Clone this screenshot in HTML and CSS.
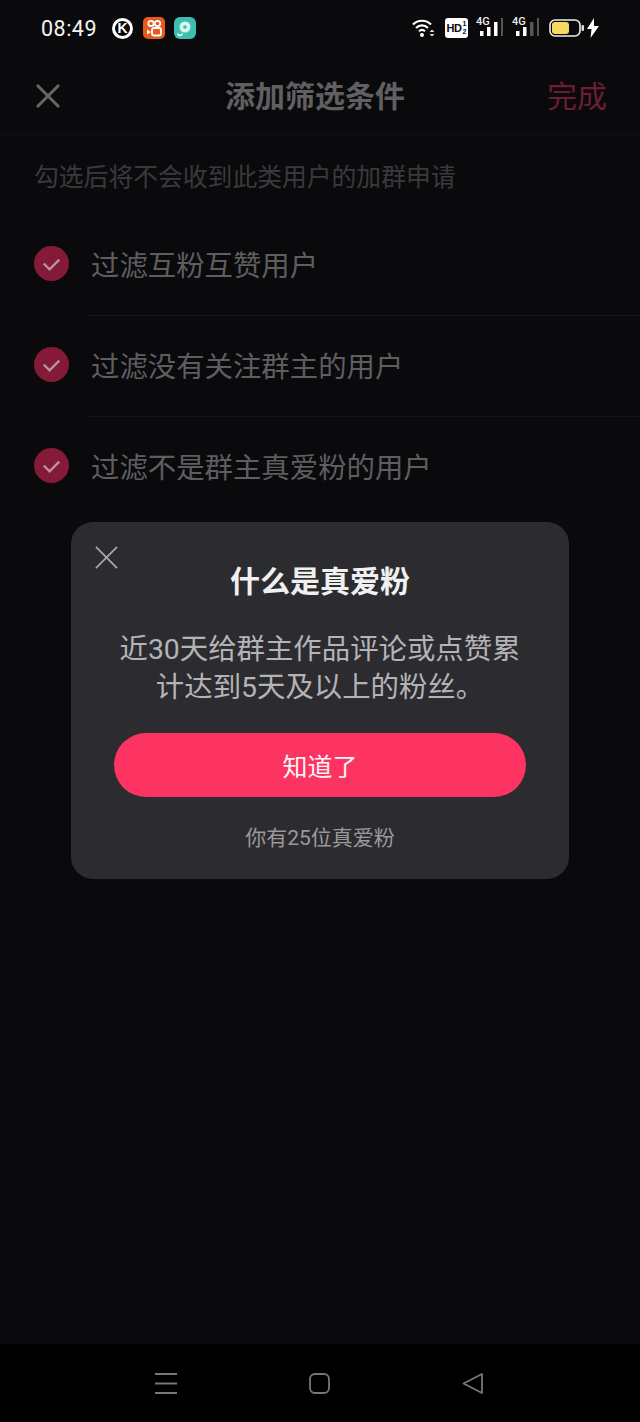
FILE: index.html
```html
<!DOCTYPE html>
<html lang="zh-CN">
<head>
<meta charset="utf-8">
<title>添加筛选条件</title>
<link rel="stylesheet" href="styles.css">
</head>
<body>
<div class="page">
  <div class="status">
    <div class="status-left">
      <span class="clock">08:49</span>
      <span class="k-icon">K</span>
      <svg class="app" width="22" height="22" viewBox="0 0 22 22"><rect width="22" height="22" rx="5" fill="#e8591c"/><circle cx="8" cy="6.500" r="2.700" fill="none" stroke="#fff" stroke-width="1.800"/><circle cx="14.500" cy="6.500" r="2.700" fill="none" stroke="#fff" stroke-width="1.800"/><rect x="9" y="11" width="9" height="7.500" rx="2" fill="none" stroke="#fff" stroke-width="1.800"/><path d="M4 12.500l4 2.500-4 2.500z" fill="#fff"/></svg>
      <svg class="app" width="22" height="22" viewBox="0 0 22 22"><rect width="22" height="22" rx="6" fill="#3dbfb0"/><circle cx="11" cy="10" r="5.500" fill="#d9f3ef"/><circle cx="11" cy="10" r="1.800" fill="#3dbfb0"/><path d="M4 16.500a2 2 0 0 0 4 0" fill="none" stroke="#fff" stroke-width="1.400"/></svg>
    </div>
    <div class="status-right">
      <svg width="24" height="20" viewBox="0 0 24 20"><path d="M1 6.500C6 1.500 14 1.500 19 6.500M4 10c3.500-3.500 8.500-3.500 12 0M7 13.200c2-1.800 4-1.800 6 0" fill="none" stroke="#fff" stroke-width="2.200"/><circle cx="10" cy="17" r="2" fill="#fff"/><path d="M20 11.500l2.500 2.500h-5zM20 18.500l2.500-2.500h-5z" fill="#ddd"/></svg>
      <span class="hd"><span class="hd-main">HD</span><span class="hd-frac"><span>1</span><span>2</span></span></span>
      <div class="signal">
        <span class="four-g">4G</span>
        <svg width="26" height="20" viewBox="0 0 26 20"><rect x="3" y="13" width="3.500" height="5" fill="#fff"/><rect x="10" y="9" width="3.500" height="9" fill="#fff"/><rect x="17" y="4" width="3.500" height="14" fill="#fff"/><rect x="24" y="0" width="2" height="18" fill="#555"/></svg>
      </div>
      <div class="signal">
        <span class="four-g">4G</span>
        <svg width="26" height="20" viewBox="0 0 26 20"><rect x="3" y="13" width="3.500" height="5" fill="#fff"/><rect x="10" y="9" width="3.500" height="9" fill="#fff"/><rect x="17" y="4" width="3.500" height="14" fill="#555"/><rect x="24" y="0" width="2" height="18" fill="#555"/></svg>
      </div>
      <svg class="battery" width="35" height="20" viewBox="0 0 35 20"><rect x="1" y="2" width="30" height="16" rx="5" fill="none" stroke="#f2f0e4" stroke-width="1.600"/><rect x="3" y="4" width="17" height="12" rx="3" fill="#f7d860"/><rect x="32.500" y="7" width="2.500" height="6" rx="1" fill="#ddd"/></svg>
      <svg class="bolt" width="12" height="20" viewBox="0 0 12 20"><path d="M7 0L0 11h4.500L3.500 20 12 8H7z" fill="#fff"/></svg>
    </div>
  </div>

  <header class="topbar">
    <svg class="close" width="26" height="26" viewBox="0 0 26 26"><path d="M2 2l22 22M24 2L2 24" stroke="#666" stroke-width="3" fill="none"/></svg>
    <h1 class="title">添加筛选条件</h1>
    <span class="done">完成</span>
  </header>

  <main class="main">
    <p class="hint">勾选后将不会收到此类用户的加群申请</p>
    <ul class="options">
      <li class="option">
        <svg class="check" width="35" height="35" viewBox="0 0 36 36"><circle cx="18" cy="18" r="18" fill="#851a38"/><path d="M10 18l6 6 10-10" fill="none" stroke="#b5959e" stroke-width="2.400"/></svg>
        <span class="option-text">过滤互粉互赞用户</span>
      </li>
      <li class="option">
        <svg class="check" width="35" height="35" viewBox="0 0 36 36"><circle cx="18" cy="18" r="18" fill="#851a38"/><path d="M10 18l6 6 10-10" fill="none" stroke="#b5959e" stroke-width="2.400"/></svg>
        <span class="option-text">过滤没有关注群主的用户</span>
      </li>
      <li class="option">
        <svg class="check" width="35" height="35" viewBox="0 0 36 36"><circle cx="18" cy="18" r="18" fill="#851a38"/><path d="M10 18l6 6 10-10" fill="none" stroke="#b5959e" stroke-width="2.400"/></svg>
        <span class="option-text">过滤不是群主真爱粉的用户</span>
      </li>
    </ul>
  </main>

  <nav class="navbar">
    <svg width="22" height="21" viewBox="0 0 22 21"><path d="M0 1h22M0 10.500h22M0 20h22" stroke="#777" stroke-width="1.800" fill="none"/></svg>
    <svg width="21" height="21" viewBox="0 0 21 21"><rect x="1" y="1" width="19" height="19" rx="5" stroke="#777" stroke-width="1.800" fill="none"/></svg>
    <svg width="21" height="21" viewBox="0 0 21 21"><path d="M1.500 10.500L20 1v19z" stroke="#777" stroke-width="1.800" stroke-linejoin="round" fill="none"/></svg>
  </nav>

  <section class="dialog">
    <svg class="dialog-close" width="23" height="23" viewBox="0 0 24 24"><path d="M1 1l22 22M23 1L1 23" stroke="#a8a8aa" stroke-width="1.800" fill="none"/></svg>
    <h2 class="dialog-title">什么是真爱粉</h2>
    <p class="dialog-body">近30天给群主作品评论或点赞累<br>计达到5天及以上的粉丝。</p>
    <button class="dialog-btn">知道了</button>
    <p class="dialog-foot">你有25位真爱粉</p>
  </section>
</div>
</body>
</html>
```

FILE: styles.css
```css
* { box-sizing: border-box; margin: 0; padding: 0; }
html, body { background: #0a0a0d; }
body { font-family: Roboto, "Noto Sans CJK SC", sans-serif; }
.page { position: relative; width: 640px; height: 1422px; display: flex; flex-direction: column; overflow: hidden; background: #0a0a0d; }

.status { height: 56px; display: flex; justify-content: space-between; align-items: center; padding: 0 41px; flex: none; color: #fff; }
.status-left { display: flex; align-items: center; }
.clock { font-size: 21.500px; letter-spacing: 0.500px; width: 71px; color: #f4f4f4; }
.k-icon { width: 21px; height: 21px; border: 3px solid #fff; border-radius: 50%; font: bold 14px/15px "Liberation Sans", sans-serif; text-align: center; margin-right: 10px; }
.app { margin-right: 9px; }
.status-right { display: flex; align-items: center; }
.hd { background: #fff; color: #0a0a0d; width: 23px; height: 20px; border-radius: 3px; margin-left: 9px; display: flex; align-items: center; justify-content: center; gap: 1px; font-family: "Liberation Sans", sans-serif; font-weight: 700; }
.hd-main { font-size: 11px; line-height: 14px; letter-spacing: -0.500px; }
.hd-frac { display: flex; flex-direction: column; font-size: 7px; line-height: 8px; }
.signal { position: relative; width: 26px; margin-left: 9px; }
.signal + .signal { margin-left: 10px; }
.signal svg { display: block; margin-top: 0; }
.four-g { position: absolute; left: -1px; top: -3px; font-size: 11px; line-height: 13px; font-weight: 500; color: #eee; }
.battery { margin-left: 10px; }
.bolt { margin-left: 3px; }

.topbar { height: 79px; flex: none; position: relative; display: flex; align-items: center; justify-content: center; border-bottom: 1px solid #111114; padding-right: 10px; }
.close { position: absolute; left: 35px; top: 27px; }
.title { font-size: 30px; font-weight: 700; color: #606062; line-height: 40px; margin-top: 4px; }
.done { position: absolute; right: 33px; top: 21px; font-size: 30px; line-height: 40px; color: #6d1c33; }

.main { flex: 1; }
.hint { font-size: 24.800px; line-height: 34px; color: #3a3a3c; padding: 26px 0 0 34px; white-space: nowrap; }
.options { list-style: none; margin-top: 20px; }
.option { position: relative; height: 101px; display: flex; align-items: center; padding-left: 34px; }
.option:not(:last-child)::after { content: ""; position: absolute; left: 87px; right: 0; bottom: 0; height: 1px; background: #141417; }
.check { flex: none; margin-bottom: 5px; }
.option-text { margin-left: 22px; margin-top: 3px; font-size: 28.400px; line-height: 40px; color: #5e5e60; white-space: nowrap; }

.navbar { height: 78px; flex: none; background: #000; display: flex; justify-content: center; align-items: center; gap: 132px; padding-top: 1px; padding-right: 2px; }

.dialog { position: absolute; left: 71px; top: 522px; width: 498px; height: 357px; background: #2c2c30; border-radius: 22px; display: flex; flex-direction: column; align-items: center; padding: 0 43px; }
.dialog-close { position: absolute; left: 24px; top: 24px; }
.dialog-title { margin-top: 39px; font-size: 30px; font-weight: 700; line-height: 42px; color: #f0f0f0; }
.dialog-body { margin-top: 28px; font-size: 28.400px; line-height: 38px; color: #b4b4b6; text-align: center; white-space: nowrap; }
.dialog-btn { margin-top: 26px; width: 412px; height: 64px; flex: none; border: 0; border-radius: 32px; background: #fd3461; color: #f6f6f6; font-family: inherit; font-size: 25px; }
.dialog-foot { margin-top: 26px; font-size: 21px; line-height: 30px; color: #9a9a9c; }
```
